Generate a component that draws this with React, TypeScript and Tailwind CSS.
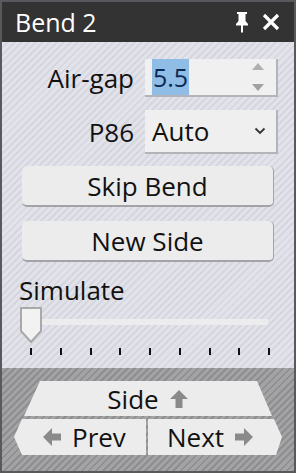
import React from "react";

const light =
  "bg-[#dedee6] bg-[repeating-linear-gradient(135deg,#e2e2ea_0px,#e2e2ea_3px,#d6d6de_3px,#d6d6de_5px)]";
const dark =
  "bg-[repeating-linear-gradient(135deg,#a3a3a5_0px,#a3a3a5_3px,#8e8e90_3px,#8e8e90_5px)]";

function Arrow({ dir }: { dir: "up" | "left" | "right" }) {
  const rot = dir === "up" ? 0 : dir === "left" ? -90 : 90;
  return (
    <svg width="20" height="20" viewBox="0 0 20 20" style={{ transform: `rotate(${rot}deg)` }}>
      <path d="M10 1 L19 10 L13.5 10 L13.5 19 L6.5 19 L6.5 10 L1 10 Z" fill="#8a8a8a" />
    </svg>
  );
}

export default function App() {
  const ticks = [0, 1, 2, 3, 4, 5, 6, 7, 8];
  return (
    <div
      className="w-[296px] h-[473px] bg-[#58585d] p-[2px] flex flex-col"
      style={{ fontFamily: '"Open Sans", "Noto Sans", sans-serif' }}
    >
      {/* title bar */}
      <div className="h-[40px] bg-[#333333] flex items-center pl-[13px] pr-[14px] shrink-0">
        <span className="text-white text-[25px] leading-none flex-1">Bend 2</span>
        <svg width="16" height="22" viewBox="0 0 16 22" className="mr-[12px]">
          <path d="M3 1 H13 V3 H11.5 V10 L14 13 V14.5 H9 V21 L8 22 L7 21 V14.5 H2 V13 L4.5 10 V3 H3 Z" fill="#ffffff" />
        </svg>
        <svg width="18" height="18" viewBox="0 0 18 18">
          <path d="M2 2 L16 16 M16 2 L2 16" stroke="#ffffff" strokeWidth="3.2" />
        </svg>
      </div>

      {/* body */}
      <div className={`flex-1 flex flex-col ${light}`}>
        <div className="pt-[17px] pl-[18px] pr-[16px]">
          {/* Air-gap */}
          <div className="flex items-center h-[38px]">
            <div className="w-[115px] text-right text-[26px] text-[#111] leading-none">Air-gap</div>
            <div className="ml-[11px] w-[134px] h-[38px] bg-[#f0f0f0] border-b-2 border-r-2 border-[#b4b4b8] flex items-center pl-[7px] pr-[12px]">
              <span className="bg-[#90bde6] text-[#0b2a54] text-[25px] leading-[36px] h-[36px] px-[1px]">5.5</span>
              <div className="flex-1" />
              <div className="flex flex-col gap-[14px]">
                <svg width="12" height="7" viewBox="0 0 12 7"><path d="M6 0 L12 7 L0 7 Z" fill="#b0b0b0" /></svg>
                <svg width="12" height="7" viewBox="0 0 12 7"><path d="M0 0 L12 0 L6 7 Z" fill="#a0a0a0" /></svg>
              </div>
            </div>
          </div>
          {/* P86 */}
          <div className="flex items-center h-[44px] mt-[13px]">
            <div className="w-[115px] text-right text-[26px] text-[#111] leading-none">P86</div>
            <div className="ml-[11px] w-[134px] h-[44px] bg-[#efefef] border-b-2 border-r-2 border-[#b4b4b8] flex items-center pl-[7px] pr-[10px]">
              <span className="text-[26px] text-[#111] leading-none">Auto</span>
              <div className="flex-1" />
              <svg width="12" height="8" viewBox="0 0 12 8"><path d="M1.5 1.5 L6 6 L10.5 1.5" stroke="#333" strokeWidth="1.8" fill="none" /></svg>
            </div>
          </div>
        </div>

        <div className="pl-[20px] pr-[20px] mt-[12px] flex flex-col gap-[14px]">
          <div className="h-[41px] rounded-[5px] bg-[#ececec] border-b-2 border-r border-[#a4a4a8] flex items-center justify-center text-[26px] leading-none text-[#111]">
            Skip Bend
          </div>
          <div className="h-[41px] rounded-[5px] bg-[#ececec] border-b-2 border-r border-[#a4a4a8] flex items-center justify-center text-[26px] leading-none text-[#111]">
            New Side
          </div>
        </div>

        <div className="pl-[17px] mt-[15px] text-[26px] leading-none text-[#111]">Simulate</div>

        {/* slider */}
        <div className="relative h-[50px] mt-[4px] ml-[18px] w-[250px]">
          <div className="absolute left-[20px] top-[12px] w-[228px] h-[6px] bg-[#ececec]" />
          <svg className="absolute left-0 top-0" width="22" height="36" viewBox="0 0 22 36">
            <path d="M1 1 H21 V24 L11 35 L1 24 Z" fill="#f2f2f2" stroke="#a9a9a9" strokeWidth="2" />
          </svg>
          {ticks.map((i) => (
            <div
              key={i}
              className="absolute top-[41px] w-[2px] h-[7px] bg-[#111]"
              style={{ left: 10 + Math.round(i * 29.75) }}
            />
          ))}
        </div>
      </div>

      {/* bottom nav */}
      <div className={`h-[103px] shrink-0 ${dark} flex flex-col items-center pt-[13px]`}>
        <div className="w-[248px] h-[35px] bg-[#ececec] [clip-path:polygon(16px_0,233px_0,100%_100%,0_100%)] flex items-center justify-center gap-[10px] text-[26px] text-[#111] leading-none">
          <span>Side</span>
          <Arrow dir="up" />
        </div>
        <div className="flex mt-[3px] gap-[2px]">
          <div className="w-[132px] h-[36px] bg-[#ececec] [clip-path:polygon(8px_0,100%_0,100%_100%,8px_100%,0_50%)] flex items-center pl-[28px] gap-[10px] text-[26px] text-[#111] leading-none">
            <Arrow dir="left" />
            <span>Prev</span>
          </div>
          <div className="w-[134px] h-[36px] bg-[#ececec] [clip-path:polygon(0_0,126px_0,100%_50%,128px_100%,0_100%)] flex items-center pl-[19px] gap-[10px] text-[26px] text-[#111] leading-none">
            <span>Next</span>
            <Arrow dir="right" />
          </div>
        </div>
      </div>
    </div>
  );
}
